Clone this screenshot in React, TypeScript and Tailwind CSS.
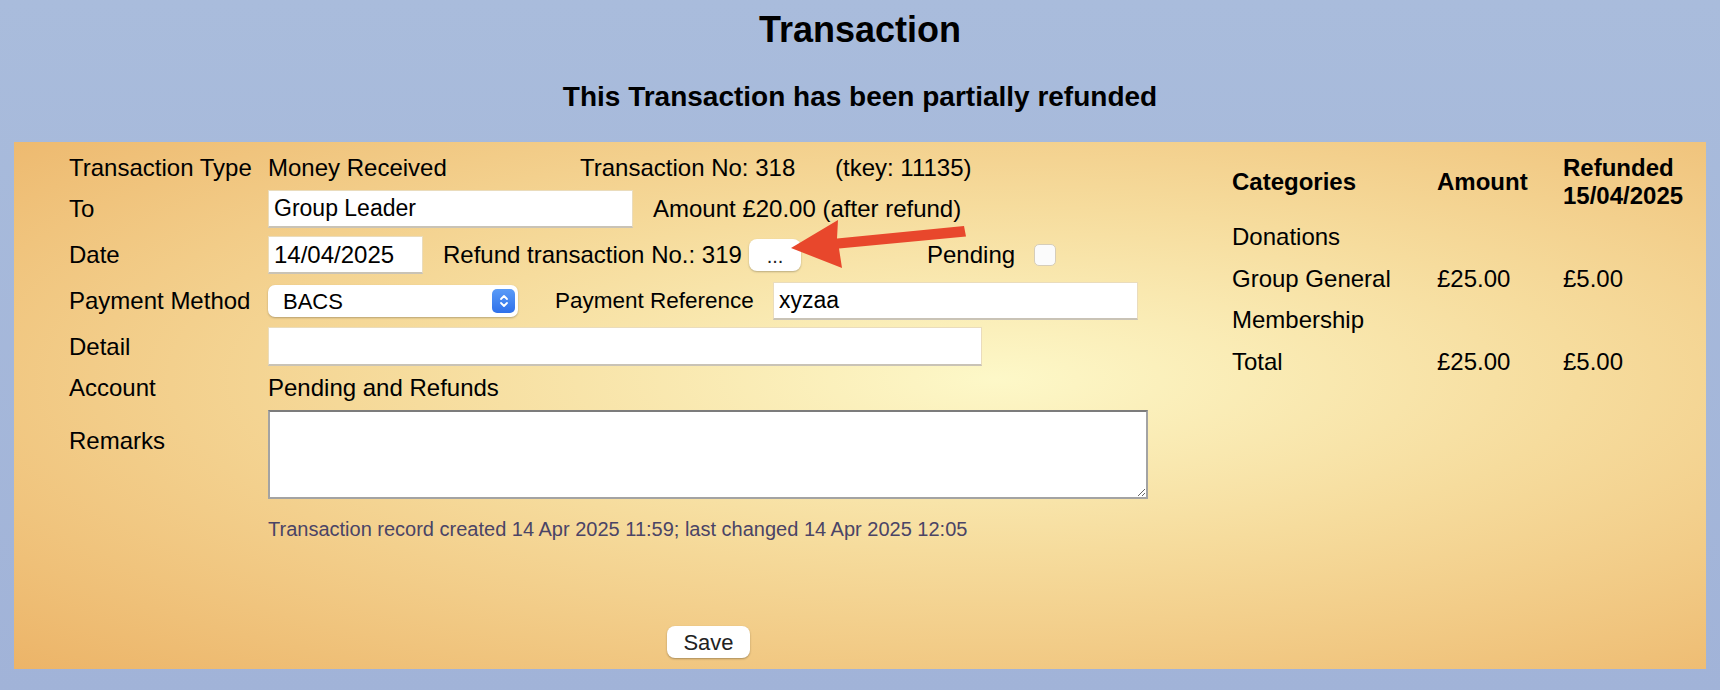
import React from "react";

const font = "font-['Liberation_Sans',Arial,sans-serif]";

function Stepper() {
  return (
    <span className="flex h-[24px] w-[23px] items-center justify-center rounded-[5px] bg-gradient-to-b from-[#5a9bf7] to-[#2f70ea]">
      <svg width="10" height="16" viewBox="0 0 10 16" fill="none" stroke="white" strokeWidth="1.8" strokeLinecap="round" strokeLinejoin="round">
        <path d="M2 6 L5 3 L8 6" />
        <path d="M2 10 L5 13 L8 10" />
      </svg>
    </span>
  );
}

function Arrow() {
  return (
    <svg className="pointer-events-none absolute left-0 top-0" width="1720" height="690" viewBox="0 0 1720 690">
      <polygon
        fill="#e8472c"
        points="791,248 838,220 837,238.5 964,226 966,236.5 839,248.5 842,268"
      />
    </svg>
  );
}

const inputCls =
  "h-[38px] shrink-0 bg-white px-[5px] text-black outline-none border border-[#eadcbc] border-b-2 border-b-[#c9c3b6]";

const row = "flex shrink-0 items-center whitespace-nowrap";

export default function App() {
  return (
    <div className={`relative h-[690px] w-[1720px] overflow-hidden bg-gradient-to-b from-[#a9bcdc] to-[#a1b3d8] text-black ${font}`}>
      <h1 className="pt-[12px] text-center text-[36px] font-bold leading-none">Transaction</h1>
      <h3 className="mt-[35px] text-center text-[28px] font-bold leading-none">This Transaction has been partially refunded</h3>

      <div className="mx-[14px] mt-[31px] flex h-[527px] bg-[radial-gradient(ellipse_at_58%_45%,#fdf8c8_0%,#f6dc9d_42%,#ecb468_100%)] text-[24px]">
        {/* form */}
        <div className="flex w-[1218px] shrink-0 flex-col pl-[55px] pt-[6px]">
          <div className={`${row} h-[40px]`}>
            <span className="w-[199px] shrink-0">Transaction Type</span>
            <span className="w-[312px] shrink-0">Money Received</span>
            <span className="w-[255px] shrink-0">Transaction No: 318</span>
            <span>(tkey: 11135)</span>
          </div>
          <div className={`${row} h-[42px]`}>
            <span className="w-[199px] shrink-0">To</span>
            <input readOnly value="Group Leader" className={`${inputCls} w-[365px] text-[23px]`} />
            <span className="ml-[20px]">Amount £20.00 (after refund)</span>
          </div>
          <div className={`${row} h-[50px]`}>
            <span className="w-[199px] shrink-0">Date</span>
            <input readOnly value="14/04/2025" className={`${inputCls} w-[155px] text-[24px]`} />
            <span className="ml-[20px] w-[298px] shrink-0">Refund transaction No.: 319</span>
            <button className="ml-[8px] h-[32px] w-[52px] shrink-0 rounded-[8px] bg-white pt-[2px] text-[20px] leading-none text-[#222] shadow-[0_1px_2px_rgba(0,0,0,0.25)]">...</button>
            <span className="ml-[126px] w-[107px] shrink-0">Pending</span>
            <span className="h-[22px] w-[22px] shrink-0 rounded-[5px] border border-[#d6cdb9] bg-[#fbfbfb]" />
          </div>
          <div className={`${row} h-[42px]`}>
            <span className="w-[199px] shrink-0">Payment Method</span>
            <div className="flex h-[32px] w-[250px] shrink-0 items-center justify-between rounded-[7px] bg-white pl-[15px] pr-[3px] text-[22px] shadow-[0_1px_2px_rgba(0,0,0,0.25)]">
              <span>BACS</span>
              <Stepper />
            </div>
            <span className="ml-[37px] w-[218px] shrink-0 text-[22.5px]">Payment Reference</span>
            <input readOnly value="xyzaa" className={`${inputCls} w-[365px] text-[23px]`} />
          </div>
          <div className={`${row} h-[49px]`}>
            <span className="w-[199px] shrink-0">Detail</span>
            <input readOnly value="" className={`${inputCls} h-[39px] w-[714px]`} />
          </div>
          <div className={`${row} h-[33px]`}>
            <span className="w-[199px] shrink-0">Account</span>
            <span>Pending and Refunds</span>
          </div>
          <div className="flex items-start">
            <span className="mt-[23px] w-[199px] shrink-0 leading-[28px]">Remarks</span>
            <textarea
              readOnly
              className="mt-[6px] h-[89px] w-[880px] shrink-0 border-2 border-[#a3a3a3] border-t-[#7c7c7c] bg-white outline-none"
            />
          </div>
          <p className="ml-[199px] mt-[18px] whitespace-nowrap text-[20px] leading-[24px] text-[#4a4466]">
            Transaction record created 14 Apr 2025 11:59; last changed 14 Apr 2025 12:05
          </p>
          <div className="ml-[598px] mt-[83px]">
            <button className="h-[32px] w-[83px] rounded-[8px] bg-white text-[22px] text-[#222] shadow-[0_1px_2px_rgba(0,0,0,0.3)]">Save</button>
          </div>
        </div>

        {/* categories */}
        <div className="pt-[5px]">
          <div className="grid grid-cols-[205px_126px_auto] whitespace-nowrap leading-[27.6px]">
            <div className="flex h-[69px] items-center font-bold">Categories</div>
            <div className="flex h-[69px] items-center font-bold">Amount</div>
            <div className="flex h-[69px] flex-col justify-center font-bold">
              <span>Refunded</span>
              <span>15/04/2025</span>
            </div>
            <div className="py-[7px]">Donations</div>
            <div className="py-[7px]"></div>
            <div className="py-[7px]"></div>
            <div className="py-[7px]">Group General</div>
            <div className="py-[7px]">£25.00</div>
            <div className="py-[7px]">£5.00</div>
            <div className="py-[7px]">Membership</div>
            <div className="py-[7px]"></div>
            <div className="py-[7px]"></div>
            <div className="py-[7px]">Total</div>
            <div className="py-[7px]">£25.00</div>
            <div className="py-[7px]">£5.00</div>
          </div>
        </div>
      </div>

      <Arrow />
    </div>
  );
}
